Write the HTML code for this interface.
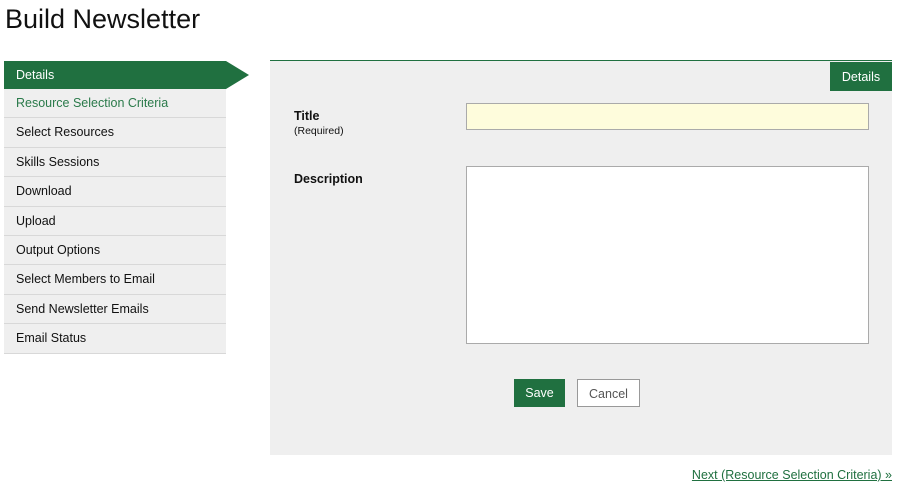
<!DOCTYPE html>
<html><head><style>
body{margin:0;width:903px;height:491px;background:#fff;font-family:"Liberation Sans",sans-serif;position:relative;overflow:hidden;color:#111}
h1{position:absolute;left:5px;top:4px;margin:0;font-weight:normal;font-size:27px;color:#111}
.nav{position:absolute;left:4px;top:61px;width:222px}
.nav div{line-height:28px;padding-left:12px;font-size:12.5px;background:#efefef;border-bottom:1px solid #d8d8d8;box-sizing:border-box;height:29.4px}
.nav .act{background:#207040;color:#fff;border:none;position:relative;height:28px}
.nav .act:after{content:"";position:absolute;left:222px;top:0;border-left:23px solid #207040;border-top:14px solid transparent;border-bottom:14px solid transparent}
.nav .g{color:#2a7a4a}
.panel{position:absolute;left:270px;top:60px;width:622px;height:394px;background:#efefef;border-top:1px solid #207040}
.tab{position:absolute;right:0;top:1px;width:62px;height:29px;background:#207040;color:#fff;font-size:12.5px;text-align:center;line-height:30px}
.lbl{position:absolute;left:24px;font-weight:bold;font-size:12.5px}
.in{position:absolute;left:196px;width:403px;border:1px solid #aaa;box-sizing:border-box}
.btn{position:absolute;top:318px;height:28px;font-size:12.5px;line-height:28px;text-align:center;box-sizing:border-box}
a{position:absolute;right:11px;top:468px;font-size:12.5px;color:#207040;text-decoration:underline}
</style></head><body>
<h1>Build Newsletter</h1>
<div class="nav">
<div class="act">Details</div>
<div class="g">Resource Selection Criteria</div>
<div>Select Resources</div>
<div>Skills Sessions</div>
<div>Download</div>
<div>Upload</div>
<div>Output Options</div>
<div>Select Members to Email</div>
<div>Send Newsletter Emails</div>
<div>Email Status</div>
</div>
<div class="panel">
<div class="tab">Details</div>
<div class="lbl" style="top:48px">Title<div style="font-weight:normal;font-size:10.5px;margin-top:2px">(Required)</div></div>
<div class="in" style="top:42px;height:27px;background:#fefcdc"></div>
<div class="lbl" style="top:111px">Description</div>
<div class="in" style="top:105px;height:178px;background:#fff"></div>
<div class="btn" style="left:244px;width:51px;background:#207040;color:#fff">Save</div>
<div class="btn" style="left:307px;width:63px;background:#fff;border:1px solid #999;color:#555">Cancel</div>
</div>
<a>Next (Resource Selection Criteria) »</a>
</body></html>
